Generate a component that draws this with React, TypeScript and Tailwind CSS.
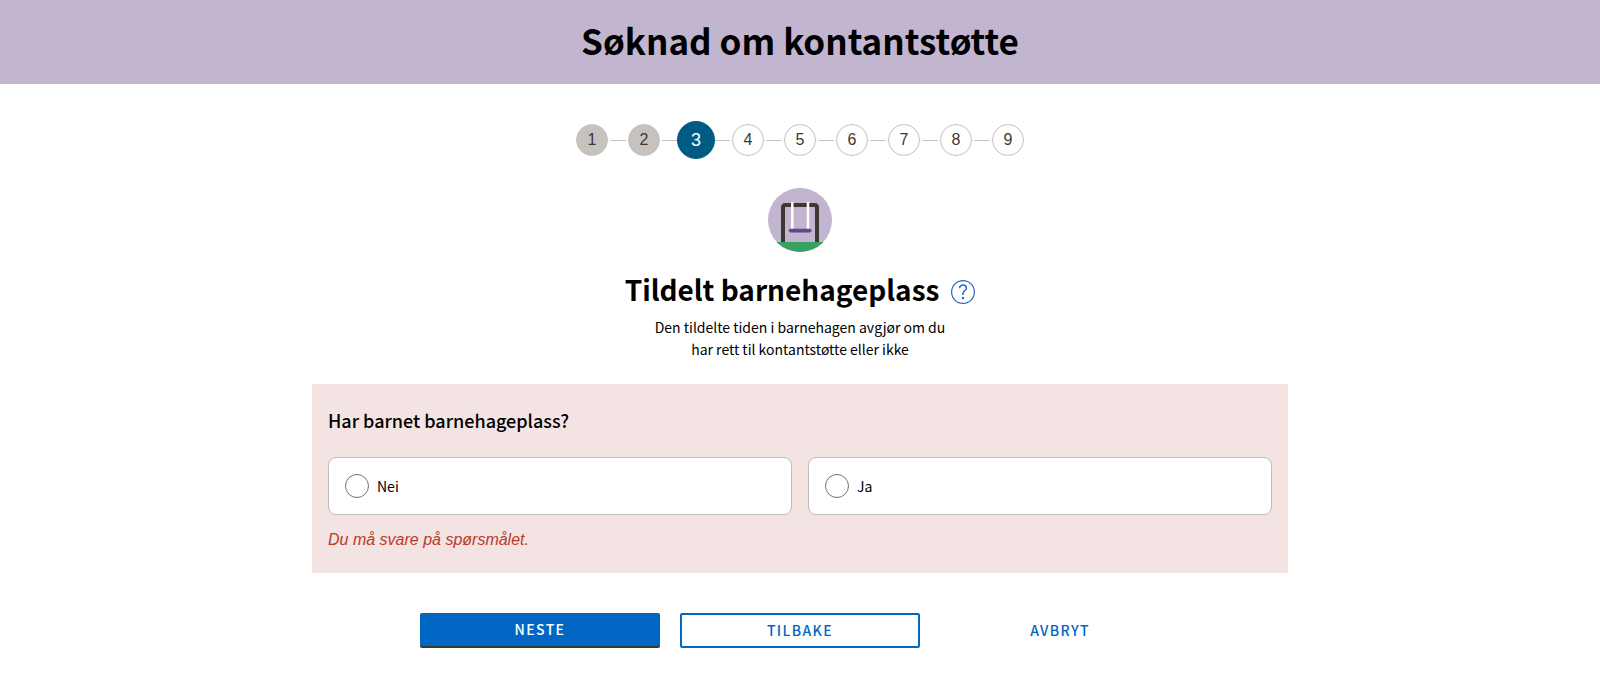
import { useState } from 'react';

const steps = [1, 2, 3, 4, 5, 6, 7, 8, 9];
const activeStep = 3;

function stepStyle(step: number) {
  if (step === activeStep) return 'size-[38px] -mx-[3px] border-[#005b82] bg-[#005b82] text-lg text-white';
  if (step < activeStep) return 'size-8 border-[#c6c2bf] bg-[#c6c2bf] text-[#3e3832]';
  return 'size-8 border-[#c6c2bf] bg-white text-[#3e3832]';
}

function Stepper() {
  return (
    <nav aria-label="Steg" className="mt-[37px]">
      <ol className="flex items-center justify-center font-['Liberation_Sans',sans-serif] text-base">
        {steps.map((step) => (
          <li key={step} className="flex items-center">
            {step > 1 && <span className="mx-0.5 h-px w-4 bg-[#c6c2bf]" />}
            <button
              type="button"
              aria-current={step === activeStep ? 'step' : undefined}
              className={`relative flex items-center justify-center rounded-full border ${stepStyle(step)}`}
            >
              {step}
            </button>
          </li>
        ))}
      </ol>
    </nav>
  );
}

function SwingIcon() {
  return (
    <svg width="64" height="64" viewBox="0 0 64 64" aria-hidden="true">
      <defs>
        <clipPath id="disc">
          <circle cx="32" cy="32" r="32" />
        </clipPath>
      </defs>
      <g clipPath="url(#disc)">
        <rect width="64" height="64" fill="#c1b5d0" />
        <path d="M15 55V19.500Q15 17 17.500 17H46.500Q49 17 49 19.500V55" fill="none" stroke="#3e3832" strokeWidth="4" />
        <path d="M24.300 14V42M40 14V42" stroke="#fff" strokeWidth="2.500" />
        <path d="M22.500 42.600H41.800" stroke="#634689" strokeWidth="3.600" strokeLinecap="round" />
        <rect y="54" width="64" height="10" fill="#38a161" />
      </g>
    </svg>
  );
}

function HelpIcon() {
  return (
    <svg width="24" height="24" viewBox="0 0 24 24" fill="none" stroke="#2868b8" aria-hidden="true">
      <circle cx="12" cy="12" r="11.400" strokeWidth="1.200" />
      <path d="M8.600 8.300C8.600 6.200 10.100 4.900 12 4.900S15.400 6.300 15.400 8.200C15.400 10.600 12 10.900 12 13.300V15" strokeWidth="1.500" />
      <circle cx="12" cy="18" r="1.200" fill="#2868b8" stroke="none" />
    </svg>
  );
}

export default function App() {
  const [answer, setAnswer] = useState('');
  const button = 'h-[35px] w-60 rounded-xs text-sm font-medium tracking-widest uppercase';

  return (
    <div className="bg-white pb-8 font-['Source_Sans_Pro','Noto_Sans_CJK_JP',sans-serif] text-sm leading-[22px] text-black">
      <header className="flex h-[84px] items-center justify-center bg-[#c1b5d0] pb-1">
        <h1 className="text-[35px] leading-[52px] font-bold">Søknad om kontantstøtte</h1>
      </header>
      <main className="mx-auto max-w-[976px]">
        <Stepper />
        <div className="mt-[29px] flex justify-center">
          <SwingIcon />
        </div>
        <div className="mt-[17px] flex items-center justify-center gap-3">
          <h2 className="pb-0.5 text-[28px] leading-10 font-bold">Tildelt barnehageplass</h2>
          <button type="button" aria-label="Hjelp" className="mt-1">
            <HelpIcon />
          </button>
        </div>
        <p className="mx-auto mt-[5px] max-w-[300px] text-center leading-[22px]">
          Den tildelte tiden i barnehagen avgjør om du har rett til kontantstøtte eller ikke
        </p>
        <form>
          <fieldset className="mt-6 bg-[#f3e3e3] px-4 pt-6 pb-[22px]">
            <legend className="float-left w-full text-lg leading-[25px] font-medium">Har barnet barnehageplass?</legend>
            <div className="clear-both grid grid-cols-2 gap-4 pt-6">
              {['Nei', 'Ja'].map((option) => (
                <label key={option} className="flex h-[58px] items-center gap-2 rounded-lg border border-[#c0bdbb] bg-white px-4">
                  <input
                    type="radio"
                    name="barnehageplass"
                    value={option}
                    checked={answer === option}
                    onChange={() => setAnswer(option)}
                    className="size-6 appearance-none rounded-full border border-[#78706a] bg-white checked:border-8 checked:border-[#0067c5]"
                  />
                  {option}
                </label>
              ))}
            </div>
            <p role="alert" className="mt-3.5 font-['Liberation_Sans',sans-serif] text-base leading-[22px] text-[#ba3a26] italic">
              Du må svare på spørsmålet.
            </p>
          </fieldset>
          <div className="mt-10 flex flex-wrap justify-center gap-5">
            <button type="button" className={`${button} border-b-2 border-[#3e3832] bg-[#0067c5] pb-0.5 text-white`}>
              Neste
            </button>
            <button type="button" className={`${button} border-2 border-[#0067c5] bg-white pb-0.5 text-[#0067c5]`}>
              Tilbake
            </button>
            <button type="button" className={`${button} pb-0.5 text-[#0067c5]`}>
              Avbryt
            </button>
          </div>
        </form>
      </main>
    </div>
  );
}
